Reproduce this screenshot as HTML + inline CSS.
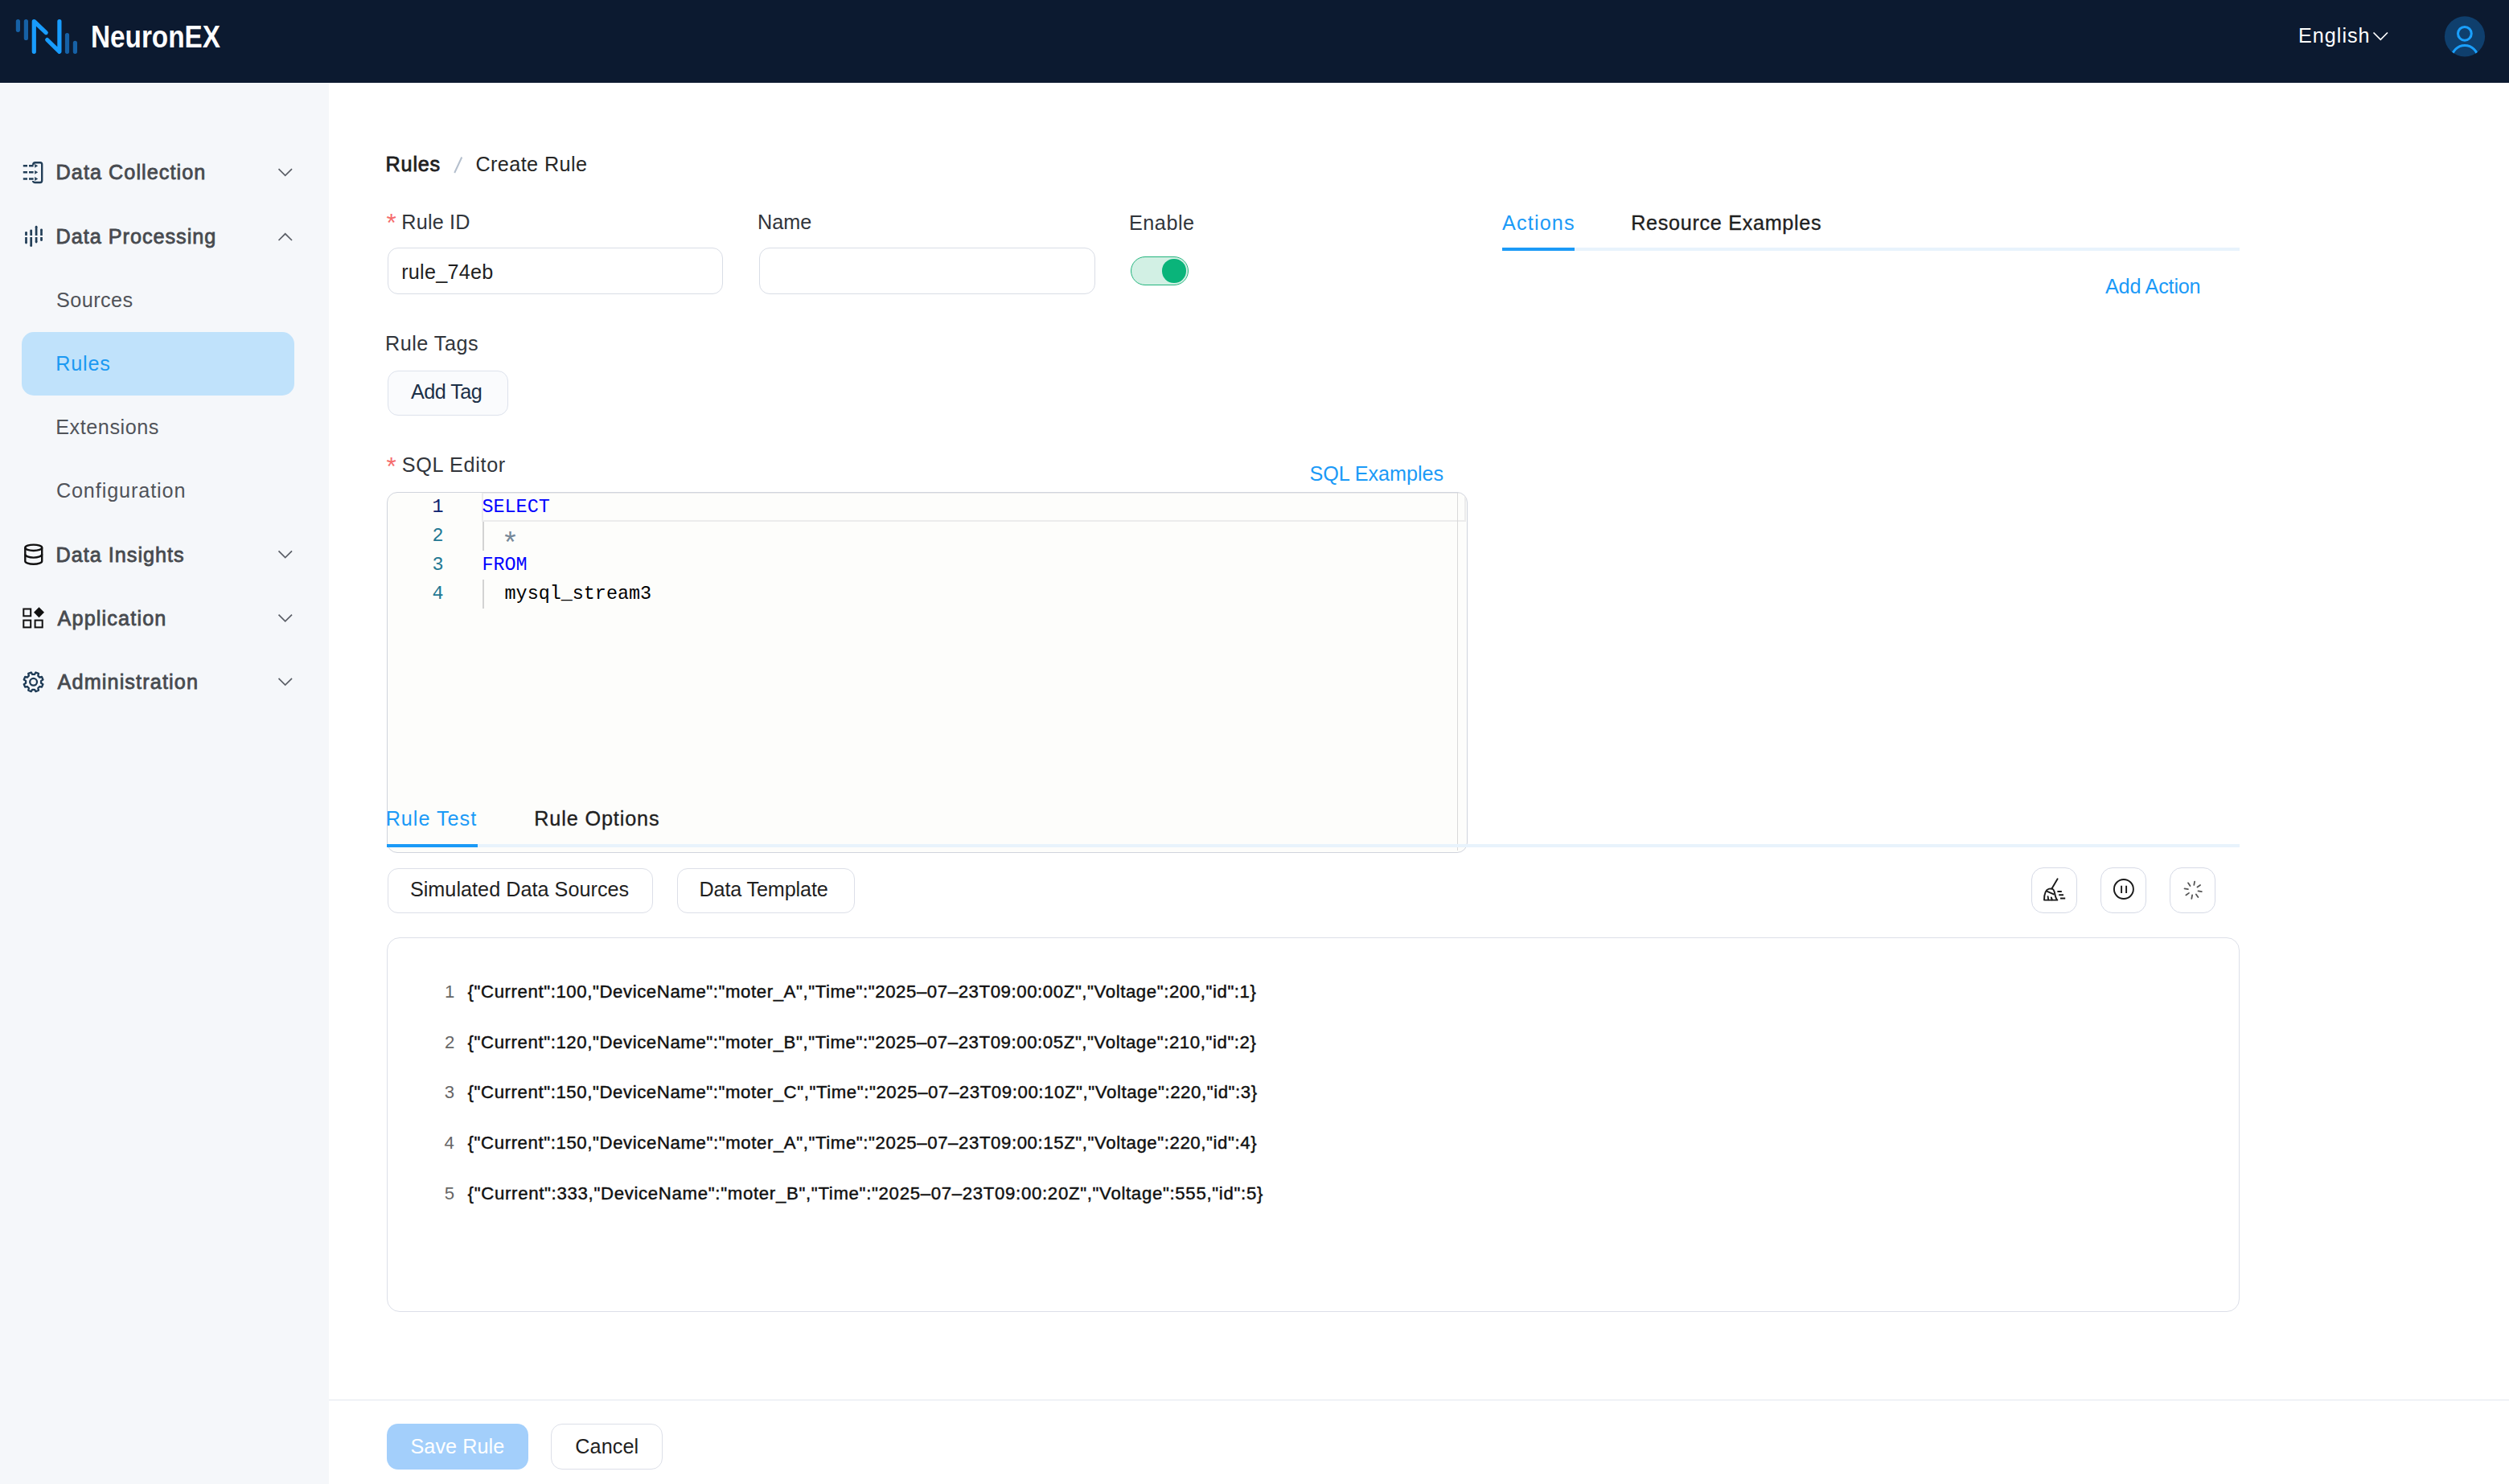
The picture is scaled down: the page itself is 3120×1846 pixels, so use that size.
<!DOCTYPE html>
<html><head><meta charset="utf-8">
<style>
*{margin:0;padding:0;box-sizing:border-box}
html,body{width:3120px;height:1846px;overflow:hidden;background:#fff;font-family:"Liberation Sans",sans-serif}
.a{position:absolute}
.t{position:absolute;white-space:pre;line-height:1;font-size:25.2px;font-family:"Liberation Sans",sans-serif}
.mono{position:absolute;white-space:pre;line-height:1;font-family:"Liberation Mono",monospace;font-size:23.4px}
svg{position:absolute;overflow:visible}
</style></head>
<body>
<div class="a" style="left:0;top:0;width:3120px;height:103px;background:#0c1a30"></div>
<div class="a" style="left:0;top:103px;width:409px;height:1743px;background:#f5f7fa"></div>
<svg style="left:0;top:0" width="120" height="103" viewBox="0 0 120 103">
<g fill="none" stroke-linecap="round" stroke-linejoin="round" stroke-width="5.2">
<path d="M22.4 26.5V37.3M32.4 26.5V47.5M83.5 43.6V64.3M93.4 53.4V64.3" stroke="#1661a6"/>
<path d="M42.3 64.3V26.5L57.2 40.6M58.7 49.5L73.9 64.3V26.5" stroke="#189cfd"/>
</g></svg>
<div class="t" style="left:113.38px;top:26.30px;font-size:39px;font-weight:bold;color:#fff;transform-origin:0 0;transform:scaleX(0.8534)">NeuronEX</div>
<div class="t" style="left:2858.00px;top:32.30px;color:#ffffff;letter-spacing:1.000px;">English</div>
<svg style="left:2940px;top:30px" width="40" height="30"><path d="M11.5 10.5L20.3 19.3L29 10.5" fill="none" stroke="#fff" stroke-width="1.7"/></svg>
<svg style="left:3030px;top:10px" width="70" height="70" viewBox="3030 10 70 70">
<defs><clipPath id="av"><circle cx="3065" cy="45.4" r="25.1"/></clipPath></defs>
<circle cx="3065" cy="45.4" r="25.1" fill="#0f3f6d"/>
<circle cx="3064.9" cy="41.8" r="8.4" fill="none" stroke="#1aa0ff" stroke-width="3"/>
<g clip-path="url(#av)"><circle cx="3065" cy="72.8" r="16.3" fill="none" stroke="#1aa0ff" stroke-width="3"/></g>
</svg>
<div class="a" style="left:27px;top:413px;width:339px;height:79px;border-radius:15px;background:#c0e2fb"></div>
<div class="t" style="left:69.60px;top:202.30px;color:#474a4f;letter-spacing:1.064px;-webkit-text-stroke:0.8px #474a4f;">Data Collection</div>
<div class="t" style="left:69.60px;top:281.50px;color:#474a4f;letter-spacing:0.993px;-webkit-text-stroke:0.8px #474a4f;">Data Processing</div>
<div class="t" style="left:70.10px;top:360.70px;color:#505359;letter-spacing:0.433px;">Sources</div>
<div class="t" style="left:69.20px;top:439.90px;color:#1b99f2;letter-spacing:0.825px;">Rules</div>
<div class="t" style="left:69.20px;top:519.10px;color:#505359;letter-spacing:0.556px;">Extensions</div>
<div class="t" style="left:69.90px;top:598.30px;color:#505359;letter-spacing:0.892px;">Configuration</div>
<div class="t" style="left:69.60px;top:677.50px;color:#474a4f;letter-spacing:1.000px;-webkit-text-stroke:0.8px #474a4f;">Data Insights</div>
<div class="t" style="left:71.60px;top:756.70px;color:#474a4f;letter-spacing:1.150px;-webkit-text-stroke:0.8px #474a4f;">Application</div>
<div class="t" style="left:71.60px;top:835.90px;color:#474a4f;letter-spacing:1.131px;-webkit-text-stroke:0.8px #474a4f;">Administration</div>
<svg style="left:0;top:0" width="400" height="900"><path d="M346.5 210.20L354.7 218.40L363 210.20" fill="none" stroke="#5a5e66" stroke-width="1.7"/></svg>
<svg style="left:0;top:0" width="400" height="900"><path d="M346.5 299.00L354.7 290.80L363 299.00" fill="none" stroke="#5a5e66" stroke-width="1.7"/></svg>
<svg style="left:0;top:0" width="400" height="900"><path d="M346.5 685.40L354.7 693.60L363 685.40" fill="none" stroke="#5a5e66" stroke-width="1.7"/></svg>
<svg style="left:0;top:0" width="400" height="900"><path d="M346.5 764.60L354.7 772.80L363 764.60" fill="none" stroke="#5a5e66" stroke-width="1.7"/></svg>
<svg style="left:0;top:0" width="400" height="900"><path d="M346.5 843.80L354.7 852.00L363 843.80" fill="none" stroke="#5a5e66" stroke-width="1.7"/></svg>
<svg style="left:0;top:0" width="80" height="900" viewBox="0 0 80 900">
<g fill="none" stroke="#233f58" stroke-width="2.4">
<path d="M28.8 206.3H34M36 206.3H41.6M28.8 214.3H34M36 214.3H41.6M28.8 222.5H34M36 222.5H41.6"/>
<path d="M41.2 205.2Q41.2 202.2 44 202.2H50Q52.2 202.2 52.2 204.6V224.6Q52.2 227 50 227H43.8Q41.2 227 41 225"/>
</g>
<g fill="#233f58"><path d="M43.2 203.9L47.2 206.3L43.2 208.7Z M43.2 211.9L47.2 214.3L43.2 216.7Z M43.2 220.1L47.2 222.5L43.2 224.9Z"/></g>
<g fill="none" stroke="#233f58" stroke-width="2.7"><path d="M32.5 289.25V293.1M32.5 295.1V302.04999999999995M38.7 286.75V293.1M38.7 295.1V305.75M45.1 282.15000000000003V293.1M45.1 295.1V301.04999999999995M51.5 285.85V293.1M51.5 295.1V298.65"/></g><g fill="#233f58"><circle cx="32.5" cy="289.25" r="1.35"/><circle cx="32.5" cy="302.04999999999995" r="1.35"/><circle cx="38.7" cy="286.75" r="1.35"/><circle cx="38.7" cy="305.75" r="1.35"/><circle cx="45.1" cy="282.15000000000003" r="1.35"/><circle cx="45.1" cy="301.04999999999995" r="1.35"/><circle cx="51.5" cy="285.85" r="1.35"/><circle cx="51.5" cy="298.65" r="1.35"/></g>
<g fill="none" stroke="#111" stroke-width="2.4">
<ellipse cx="41.75" cy="681.3" rx="10.45" ry="3.7"/>
<path d="M31.3 681.3V697.9M52.2 681.3V697.9"/>
<path d="M31.3 689.6A10.45 4 0 0 0 52.2 689.6M31.3 697.9A10.45 3.9 0 0 0 52.2 697.9"/>
</g>
<g fill="none" stroke="#111" stroke-width="2">
<rect x="29.3" y="757.5" width="8.9" height="8.8"/><rect x="29.3" y="771.6" width="8.9" height="8.8"/><rect x="43.6" y="771.6" width="9.1" height="8.8"/>
</g>
<path d="M48.5 755.2L55 761.7L48.5 768.2L42 761.7Z" fill="#111"/>

<path d="M51.09 849.72 L53.46 851.15 L52.00 854.67 L49.32 854.01 L47.31 856.02 L47.97 858.70 L44.45 860.16 L43.02 857.79 L40.18 857.79 L38.75 860.16 L35.23 858.70 L35.89 856.02 L33.88 854.01 L31.20 854.67 L29.74 851.15 L32.11 849.72 L32.11 846.88 L29.74 845.45 L31.20 841.93 L33.88 842.59 L35.89 840.58 L35.23 837.90 L38.75 836.44 L40.18 838.81 L43.02 838.81 L44.45 836.44 L47.97 837.90 L47.31 840.58 L49.32 842.59 L52.00 841.93 L53.46 845.45 L51.09 846.88Z" fill="none" stroke="#1d3a55" stroke-width="2.3" stroke-linejoin="round"/><circle cx="41.6" cy="848.3" r="4.4" fill="none" stroke="#1d3a55" stroke-width="2.3"/></svg>
<div class="t" style="left:479.60px;top:191.50px;color:#1f1f1f;letter-spacing:0.800px;-webkit-text-stroke:0.8px #1f1f1f;">Rules</div>
<svg style="left:0;top:0" width="700" height="300"><path d="M574.3 195.5L565.2 215" stroke="#b4bfcd" stroke-width="2"/></svg>
<div class="t" style="left:591.40px;top:191.50px;color:#262626;letter-spacing:0.420px;">Create Rule</div>
<div class="t" style="left:480.50px;top:261.98px;color:#f56c6c;font-size:31.5px;">*</div>
<div class="t" style="left:499.30px;top:264.20px;color:#31353b;letter-spacing:0.200px;">Rule ID</div>
<div class="t" style="left:942.00px;top:264.20px;color:#31353b;">Name</div>
<div class="t" style="left:1404.00px;top:264.70px;color:#31353b;letter-spacing:0.520px;">Enable</div>
<div class="a" style="left:481.5px;top:308px;width:417.5px;height:57.5px;border:1.8px solid #d9dde6;border-radius:13px;background:#fff"></div>
<div class="t" style="left:499.20px;top:326.20px;color:#1f1f1f;letter-spacing:0.250px;">rule_74eb</div>
<div class="a" style="left:943.5px;top:308px;width:418px;height:57.5px;border:1.8px solid #d9dde6;border-radius:13px;background:#fff"></div>
<div class="a" style="left:1406px;top:319px;width:72px;height:36px;border-radius:18px;background:#d2f0e4;border:1.5px solid #22b47d"></div>
<div class="a" style="left:1445.2px;top:322.4px;width:29.6px;height:29.6px;border-radius:50%;background:#0ab47a"></div>
<div class="a" style="left:1868px;top:308px;width:917px;height:3.6px;background:#e8f3fc"></div>
<div class="a" style="left:1868px;top:308px;width:90px;height:3.6px;background:#1b9af7"></div>
<div class="t" style="left:1868.00px;top:264.70px;color:#1b9af7;letter-spacing:1.167px;">Actions</div>
<div class="t" style="left:2028.17px;top:264.70px;color:#1f1f1f;letter-spacing:0.691px;-webkit-text-stroke:0.35px #1f1f1f;">Resource Examples</div>
<div class="t" style="left:2618.00px;top:344.20px;color:#1b9af7;letter-spacing:-0.200px;">Add Action</div>
<div class="t" style="left:479.00px;top:414.70px;color:#31353b;letter-spacing:0.500px;">Rule Tags</div>
<div class="a" style="left:481.5px;top:460.5px;width:150px;height:56px;border:1.6px solid #dde2ec;border-radius:13px;background:#fafbfd"></div>
<div class="t" style="left:511.00px;top:475.40px;color:#1c3048;letter-spacing:-0.517px;">Add Tag</div>
<div class="t" style="left:480.50px;top:564.78px;color:#f56c6c;font-size:31.5px;">*</div>
<div class="t" style="left:499.80px;top:566.40px;color:#31353b;letter-spacing:0.689px;">SQL Editor</div>
<div class="t" style="left:1628.40px;top:577.20px;color:#1b9af7;letter-spacing:-0.027px;">SQL Examples</div>
<div class="a" style="left:481px;top:611.5px;width:1344px;height:449.5px;border:1.6px solid #d0d4dd;border-radius:13px;background:#fdfdfb;overflow:hidden">
<div class="a" style="left:117px;top:0px;width:1224px;height:36.5px;border:2px solid #ececec;border-top-width:1.5px"></div>
<div class="a" style="left:1330px;top:0;width:1.3px;height:445px;background:#d9d9d9"></div>
<div class="a" style="left:117.5px;top:36px;width:2px;height:36px;background:#d3d3d3"></div>
<div class="a" style="left:117.5px;top:108px;width:2px;height:36px;background:#d3d3d3"></div>
</div>
<div class="mono" style="left:537.46px;top:619.80px;color:#0b216f">1</div>
<div class="mono" style="left:599.5px;top:619.80px;color:#0000ff">SELECT</div>
<div class="mono" style="left:537.46px;top:655.80px;color:#237893">2</div>
<div class="mono" style="left:599.5px;top:655.80px;color:#778899"></div>
<div class="mono" style="left:537.46px;top:691.80px;color:#237893">3</div>
<div class="mono" style="left:599.5px;top:691.80px;color:#0000ff">FROM</div>
<div class="mono" style="left:537.46px;top:727.80px;color:#237893">4</div>
<div class="mono" style="left:599.5px;top:727.80px;color:#000000">  mysql_stream3</div>
<div class="mono" style="left:623.4px;top:661.2px;font-size:36.5px;color:#778899">*</div>
<div class="a" style="left:481px;top:1050px;width:2304px;height:3.8px;background:#e8f3fc"></div>
<div class="a" style="left:481px;top:1050px;width:113px;height:3.8px;background:#1b9af7"></div>
<div class="t" style="left:479.70px;top:1006.30px;color:#1b9af7;letter-spacing:0.988px;">Rule Test</div>
<div class="t" style="left:664.17px;top:1006.30px;color:#1f1f1f;letter-spacing:0.895px;-webkit-text-stroke:0.35px #1f1f1f;">Rule Options</div>
<div class="a" style="left:481.5px;top:1079.5px;width:330px;height:56px;border:1.6px solid #dcdfe8;border-radius:13px;background:#fff"></div>
<div class="t" style="left:509.90px;top:1094.30px;color:#1f1f1f;letter-spacing:0.033px;">Simulated Data Sources</div>
<div class="a" style="left:841.5px;top:1079.5px;width:221px;height:56px;border:1.6px solid #dcdfe8;border-radius:13px;background:#fff"></div>
<div class="t" style="left:869.50px;top:1094.30px;color:#1f1f1f;letter-spacing:-0.142px;">Data Template</div>
<div class="a" style="left:2526.3px;top:1079.3px;width:57px;height:56.5px;border:1.6px solid #d6dae6;border-radius:15px;background:#fff"></div>
<div class="a" style="left:2612.2px;top:1079.3px;width:57px;height:56.5px;border:1.6px solid #d6dae6;border-radius:15px;background:#fff"></div>
<div class="a" style="left:2698px;top:1079.3px;width:57px;height:56.5px;border:1.6px solid #d6dae6;border-radius:15px;background:#fff"></div>
<svg style="left:0;top:0" width="3120" height="1200" viewBox="0 0 3120 1200">
<g fill="none" stroke="#1a1a1a" stroke-width="1.9" stroke-linecap="round" stroke-linejoin="round">
<path d="M2558.6 1093.3L2551.4 1105.6"/>
<path d="M2542 1119.6C2542 1112 2544 1106.5 2548 1105.6L2551.4 1105.4C2553.8 1106 2554.6 1108.5 2555.2 1111.5C2555.8 1115 2556.8 1118 2558.4 1119.6Z"/>
<path d="M2545.8 1108.8L2553.8 1112.4M2546.6 1115.2L2547.2 1119.4M2550.8 1116.4L2551.8 1119.4"/>
</g>
<g stroke="#1a1a1a" stroke-width="1.9">
<path d="M2558.4 1109H2563.8M2560.2 1113.2H2566M2562 1117.5H2568.2"/>
</g>
<circle cx="2640.9" cy="1106" r="12" fill="none" stroke="#1a1a1a" stroke-width="1.9"/>
<path d="M2638.1 1101.8V1111M2644.1 1101.8V1111" stroke="#1a1a1a" stroke-width="1.9"/>

<path d="M2728.31 1100.90L2729.08 1096.56M2732.44 1103.53L2736.05 1101.01M2733.50 1108.31L2737.84 1109.08M2730.87 1112.44L2733.39 1116.05M2726.09 1113.50L2725.32 1117.84M2721.96 1110.87L2718.35 1113.39M2720.90 1106.09L2716.56 1105.32M2723.53 1101.96L2721.01 1098.35" stroke="#555" stroke-width="1.8" stroke-linecap="round"/></svg>
<div class="a" style="left:481.3px;top:1165.5px;width:2303.5px;height:466.5px;border:1.6px solid #dcdfe8;border-radius:16px;background:#fff"></div>
<div class="t" style="left:552.90px;top:1222.80px;color:#666666;font-size:22.2px;">1</div>
<div class="t" style="left:581.62px;top:1222.80px;color:#111111;font-size:22.2px;letter-spacing:0.590px;-webkit-text-stroke:0.45px #111111;">{"Current":100,"DeviceName":"moter_A","Time":"2025–07–23T09:00:00Z","Voltage":200,"id":1}</div>
<div class="t" style="left:552.90px;top:1285.60px;color:#666666;font-size:22.2px;">2</div>
<div class="t" style="left:581.62px;top:1285.60px;color:#111111;font-size:22.2px;letter-spacing:0.590px;-webkit-text-stroke:0.45px #111111;">{"Current":120,"DeviceName":"moter_B","Time":"2025–07–23T09:00:05Z","Voltage":210,"id":2}</div>
<div class="t" style="left:552.80px;top:1348.40px;color:#666666;font-size:22.2px;">3</div>
<div class="t" style="left:581.62px;top:1348.40px;color:#111111;font-size:22.2px;letter-spacing:0.590px;-webkit-text-stroke:0.45px #111111;">{"Current":150,"DeviceName":"moter_C","Time":"2025–07–23T09:00:10Z","Voltage":220,"id":3}</div>
<div class="t" style="left:552.50px;top:1411.20px;color:#666666;font-size:22.2px;">4</div>
<div class="t" style="left:581.62px;top:1411.20px;color:#111111;font-size:22.2px;letter-spacing:0.597px;-webkit-text-stroke:0.45px #111111;">{"Current":150,"DeviceName":"moter_A","Time":"2025–07–23T09:00:15Z","Voltage":220,"id":4}</div>
<div class="t" style="left:552.80px;top:1474.00px;color:#666666;font-size:22.2px;">5</div>
<div class="t" style="left:581.62px;top:1474.00px;color:#111111;font-size:22.2px;letter-spacing:0.685px;-webkit-text-stroke:0.45px #111111;">{"Current":333,"DeviceName":"moter_B","Time":"2025–07–23T09:00:20Z","Voltage":555,"id":5}</div>
<div class="a" style="left:409px;top:1740.8px;width:2711px;height:1.4px;background:#e2e7ee"></div>
<div class="a" style="left:481.1px;top:1771.1px;width:176px;height:57px;border-radius:14px;background:#a3cffb"></div>
<div class="t" style="left:510.50px;top:1786.90px;color:#ffffff;letter-spacing:0.062px;">Save Rule</div>
<div class="a" style="left:685.4px;top:1771.1px;width:139px;height:57px;border:1.6px solid #dcdfe8;border-radius:14px;background:#fff"></div>
<div class="t" style="left:715.20px;top:1786.90px;color:#1f1f1f;letter-spacing:0.120px;">Cancel</div>
</body></html>
